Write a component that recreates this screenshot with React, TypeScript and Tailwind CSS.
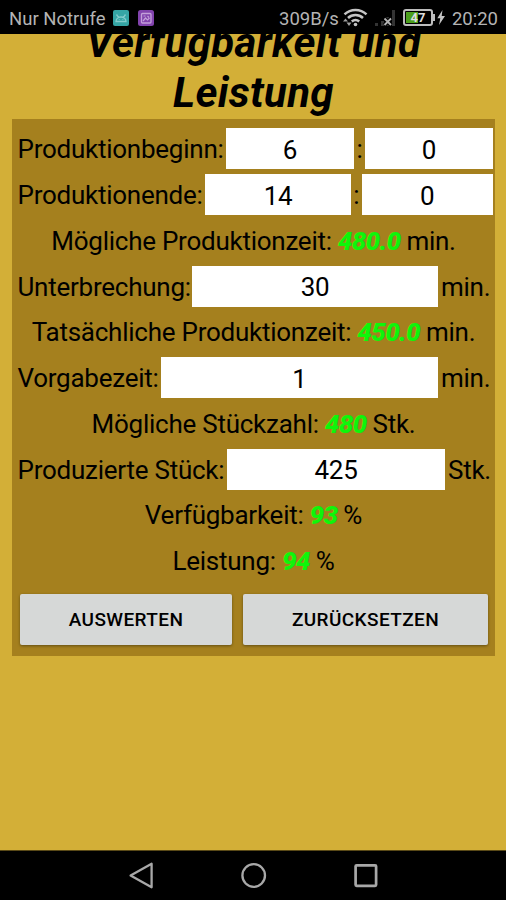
import { useState, type ReactNode } from "react";

interface FieldProps {
  label: string;
  value: string;
  onChange: (value: string) => void;
  className: string;
}

function Field({ label, value, onChange, className }: FieldProps) {
  return (
    <input
      aria-label={label}
      value={value}
      onChange={(e) => onChange(e.target.value)}
      className={`h-[41px] shrink-0 rounded-none bg-white pt-[2px] text-center text-black outline-none ${className}`}
    />
  );
}

function FormRow({ children }: { children: ReactNode }) {
  return (
    <div className="flex h-[45.75px] items-center pl-[5.5px] whitespace-nowrap">
      {children}
    </div>
  );
}

interface ResultRowProps {
  label: string;
  value: string;
  unit: string;
}

function ResultRow({ label, value, unit }: ResultRowProps) {
  return (
    <div className="flex h-[45.75px] items-center justify-center gap-[6px] pt-[2px] whitespace-nowrap">
      <span>{label}</span>
      <span className="font-black tracking-[-0.7px] text-[#0ff50a] italic">{value}</span>
      <span>{unit}</span>
    </div>
  );
}

function StatusBar() {
  return (
    <header className="flex h-[34px] shrink-0 items-center bg-black pt-[4px] pr-[8px] pl-[9px] text-[18.5px] leading-[20px] text-[#b4b4b4]">
      <span className="w-[104px] whitespace-nowrap">Nur Notrufe</span>
      <svg className="mt-[-3px] h-4 w-4" viewBox="0 0 16 16">
        <rect width="16" height="16" rx="2" fill="#35a5a5" />
        <path d="M3 11.5a5 4.5 0 0 1 10 0zM3.5 4.5l2 2.8M12.5 4.5l-2 2.8" fill="none" stroke="#83cccc" strokeWidth="1.3" />
        <path d="M5.8 9.5h.8M9.5 9.5h.8" stroke="#83cccc" />
      </svg>
      <svg className="mt-[-3px] ml-[9px] h-4 w-4" viewBox="0 0 16 16">
        <rect width="16" height="16" rx="2.5" fill="#8243ad" />
        <rect x="3.5" y="3.5" width="9.5" height="9.5" rx="1" fill="none" stroke="#c4a0da" strokeWidth="1.3" />
        <path d="M5.5 6h2M9.5 6l1.5 1.5M5 11l2.5-3 2 2 2-2" fill="none" stroke="#c4a0da" strokeWidth="1.2" />
      </svg>
      <div className="ml-auto flex items-center">
        <span>309B/s</span>
        <svg className="mt-[-3px] ml-[4px] h-[19px] w-[25px]" viewBox="0 0 25 19" fill="none" stroke="#c4c4c4">
          <path d="M1.5 6.3a16 16 0 0 1 22 0" strokeWidth="2.5" />
          <path d="M5 10a11 11 0 0 1 15 0" strokeWidth="2.5" />
          <path d="M8.8 13.5a5.5 5.5 0 0 1 7.4 0" strokeWidth="2.5" />
          <circle cx="12.5" cy="16.5" r="1.8" fill="#c4c4c4" stroke="none" />
          <path d="M0 13.5h5l-2.5-3zM3.5 14.5h5l-2.5 3.5z" fill="#a0a0a0" stroke="none" />
        </svg>
        <svg className="mt-[-3px] ml-[6px] h-[18px] w-[22px]" viewBox="0 0 22 18">
          <path d="M1 14h3v3H1zM7 12h3v5H7zM12 8h3v9h-3zM18 1h3v16h-3z" fill="#343434" />
          <path d="M10.5 9.5l6.5 6.5M17 9.5l-6.5 6.5" stroke="#000" strokeWidth="4" />
          <path d="M10.5 9.5l6.5 6.5M17 9.5l-6.5 6.5" stroke="#b4b4b4" strokeWidth="1.8" />
        </svg>
        <div className="mt-[-3px] ml-[7px] flex h-[17px] w-[33px] items-center">
          <div className="flex h-[17px] w-[30px] items-center justify-center rounded-[3px] border-[2px] border-[#bdbdbd] bg-[linear-gradient(to_right,#4b9f1c_13px,#000_13px)] bg-clip-content p-px text-[13px] leading-[13px] font-bold text-[#dedede]">
            47
          </div>
          <div className="h-[7px] w-[2px] bg-[#bdbdbd]" />
        </div>
        <svg className="mt-[-3px] ml-px h-[15px] w-[8px]" viewBox="0 0 8 15">
          <path d="M5.5 0L.3 8.3h3L2 15l6-9H4.7z" fill="#c4c4c4" />
        </svg>
        <span className="ml-[7px]">20:20</span>
      </div>
    </header>
  );
}

function NavigationBar() {
  return (
    <nav className="flex h-[50px] shrink-0 items-center justify-center gap-[86px] border-t border-[#5a4a17] bg-black">
      <svg className="h-[28px] w-[28px]" viewBox="0 0 28 28">
        <path d="M24.6 1.7v23.6L3.6 13.5z" fill="none" stroke="#a8a8a8" strokeWidth="2.3" strokeLinejoin="round" />
      </svg>
      <svg className="h-[26px] w-[26px]" viewBox="0 0 26 26">
        <circle cx="12.7" cy="12.5" r="11.3" fill="none" stroke="#a8a8a8" strokeWidth="2.3" />
      </svg>
      <svg className="h-[26px] w-[26px]" viewBox="0 0 26 26">
        <rect x="2.6" y="2.3" width="20.5" height="20.5" rx="1" fill="none" stroke="#a8a8a8" strokeWidth="2.7" />
      </svg>
    </nav>
  );
}

const initialValues = {
  startHour: "6",
  startMinute: "0",
  endHour: "14",
  endMinute: "0",
  pause: "30",
  target: "1",
  produced: "425",
};

export default function App() {
  const [values, setValues] = useState(initialValues);

  const set = (key: keyof typeof initialValues) => (value: string) =>
    setValues((prev) => ({ ...prev, [key]: value }));

  return (
    <div className="flex h-[900px] w-[506px] flex-col overflow-hidden bg-[#d3af37] font-['Roboto',sans-serif] text-black">
      <StatusBar />

      {/* the title is scrolled partly under the status bar */}
      <main className="min-h-0 flex-1 overflow-hidden pr-[11px] pl-[12px]">
        <h1 className="mt-[-16px] h-[100.5px] text-center text-[42px] leading-[50px] font-bold tracking-[0.3px] italic">
          Verfügbarkeit und
          <br />
          Leistung
        </h1>

        <div className="h-[537.5px] bg-[#a5801e] pt-[7.5px] text-[26px] tracking-[-0.25px]">
          <FormRow>
            <span className="w-[208.5px] pt-[2px]">Produktionbeginn:</span>
            <Field label="Beginn Stunde" value={values.startHour} onChange={set("startHour")} className="w-[128px]" />
            <span className="w-[11px] pt-[2px] text-center">:</span>
            <Field label="Beginn Minute" value={values.startMinute} onChange={set("startMinute")} className="w-[128px]" />
          </FormRow>
          <FormRow>
            <span className="w-[187.5px] pt-[2px]">Produktionende:</span>
            <Field label="Ende Stunde" value={values.endHour} onChange={set("endHour")} className="w-[146px]" />
            <span className="w-[10.5px] pt-[2px] text-center">:</span>
            <Field label="Ende Minute" value={values.endMinute} onChange={set("endMinute")} className="w-[131.5px]" />
          </FormRow>
          <ResultRow label="Mögliche Produktionzeit:" value="480.0" unit="min." />
          <FormRow>
            <span className="w-[174.5px] pt-[2px]">Unterbrechung:</span>
            <Field label="Unterbrechung" value={values.pause} onChange={set("pause")} className="w-[246px]" />
            <span className="ml-[3px] pt-[2px]">min.</span>
          </FormRow>
          <ResultRow label="Tatsächliche Produktionzeit:" value="450.0" unit="min." />
          <FormRow>
            <span className="w-[143.5px] pt-[2px]">Vorgabezeit:</span>
            <Field label="Vorgabezeit" value={values.target} onChange={set("target")} className="w-[277px]" />
            <span className="ml-[3px] pt-[2px]">min.</span>
          </FormRow>
          <ResultRow label="Mögliche Stückzahl:" value="480" unit="Stk." />
          <FormRow>
            <span className="w-[209.5px] pt-[2px]">Produzierte Stück:</span>
            <Field label="Produzierte Stück" value={values.produced} onChange={set("produced")} className="w-[218px]" />
            <span className="ml-[3px] pt-[2px]">Stk.</span>
          </FormRow>
          <ResultRow label="Verfügbarkeit:" value="93" unit="%" />
          <ResultRow label="Leistung:" value="94" unit="%" />

          <div className="mt-[10px] flex gap-[11px] pl-[8px] text-[19px] font-medium tracking-[0.4px]">
            <button className="h-[51px] w-[212px] rounded-[2px] bg-[#d6d8d7] pt-[2px] shadow-[0_1px_3px_rgba(0,0,0,0.4)]">
              AUSWERTEN
            </button>
            <button className="h-[51px] w-[245px] rounded-[2px] bg-[#d6d8d7] pt-[2px] shadow-[0_1px_3px_rgba(0,0,0,0.4)]">
              ZURÜCKSETZEN
            </button>
          </div>
        </div>
      </main>

      <NavigationBar />
    </div>
  );
}
